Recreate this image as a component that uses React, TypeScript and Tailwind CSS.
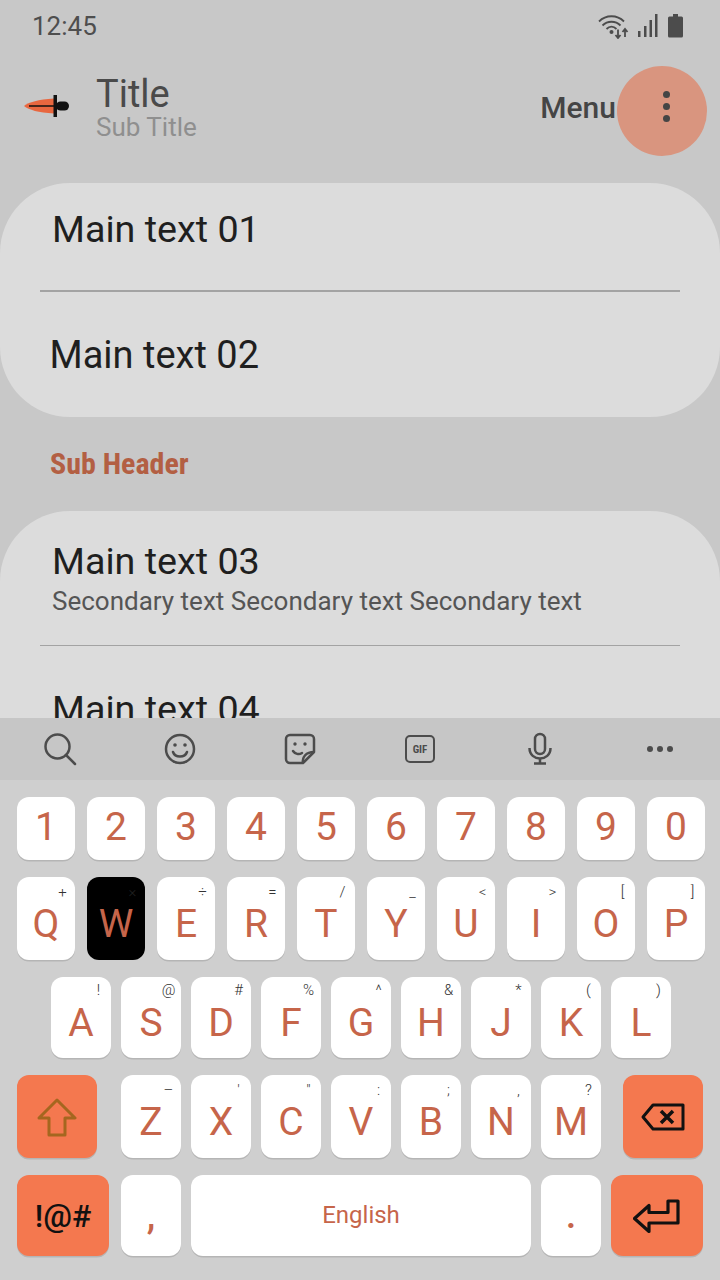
function Key({ label, sub, w = "w-[60px]", h, black, subTop = "top-[6px]" }: { label: string; sub?: string; w?: string; h: string; black?: boolean; subTop?: string }) {
  return (
    <div className={`relative ${w} ${h} shrink-0 rounded-[12px] flex items-center justify-center ${black ? "bg-black" : "bg-white shadow-[0_1.5px_0_#b5b5b5]"}`}>
      <span className="text-[39px] leading-none text-[#c6654a] mt-[12px]">{label}</span>
      {sub && <span className={`absolute ${subTop} right-0 w-[25px] text-center text-[15px] leading-[18px] font-light ${black ? "text-[#222]" : "text-[#333]"}`}>{sub}</span>}
    </div>
  );
}

function Num({ label }: { label: string }) {
  return (
    <div className="w-[58px] h-[63px] shrink-0 rounded-[12px] bg-white shadow-[0_1.5px_0_#b5b5b5] flex items-center justify-center">
      <span className="text-[39px] leading-none text-[#c6654a] mb-[2px]">{label}</span>
    </div>
  );
}

const row2: [string, string][] = [["Q", "+"], ["W", "×"], ["E", "÷"], ["R", "="], ["T", "/"], ["Y", "_"], ["U", "<"], ["I", ">"], ["O", "["], ["P", "]"]];
const row3: [string, string][] = [["A", "!"], ["S", "@"], ["D", "#"], ["F", "%"], ["G", "^"], ["H", "&"], ["J", "*"], ["K", "("], ["L", ")"]];
const row4: [string, string][] = [["Z", "–"], ["X", "'"], ["C", '"'], ["V", ":"], ["B", ";"], ["N", ","], ["M", "?"]];

export default function App() {
  return (
    <div className="w-[720px] h-[1280px] overflow-hidden flex flex-col bg-[#c8c8c8] font-['Roboto',sans-serif]">
      <div className="h-[718px] shrink-0 overflow-hidden">
        {/* status bar */}
        <div className="h-[52px] pl-[32px] pr-[36px] flex items-center justify-between">
          <span className="text-[26px] leading-none text-[#4e4e4e]">12:45</span>
          <div className="flex items-center gap-[8px]">
            <svg width="32" height="26" viewBox="0 0 32 26" fill="none" stroke="#4c4c4c" strokeWidth="1.800">
              <path d="M1 8.500C8 1.500 19 1.500 26 8.500" />
              <path d="M4.500 12.500C9.500 7.500 17.500 7.500 22.500 12.500" />
              <path d="M8.500 16C11.500 13 15.500 13 18.500 16" />
              <circle cx="13.500" cy="19" r="2" fill="#4c4c4c" stroke="none" />
              <path d="M20 16.500V25M17.500 22l2.500 3 2.500-3" strokeWidth="1.800" />
              <path d="M27 24V16M24.500 19l2.500-3 2.500 3" strokeWidth="1.800" />
            </svg>
            <svg width="20" height="24" viewBox="0 0 20 24" fill="#4c4c4c">
              <rect x="0" y="17" width="2.500" height="6" />
              <rect x="6" y="12" width="2.500" height="11" />
              <rect x="11.500" y="6" width="2.500" height="17" />
              <rect x="17" y="0" width="2.500" height="23" />
            </svg>
            <svg width="16" height="24" viewBox="0 0 16 24" fill="#4c4c4c" className="ml-[2px]">
              <path d="M5 0h5v2.500h3.500a1.500 1.500 0 0 1 1.500 1.500v18a1.500 1.500 0 0 1-1.500 1.500h-12a1.500 1.500 0 0 1-1.500-1.500V4a1.500 1.500 0 0 1 1.500-1.500H5z" />
            </svg>
          </div>
        </div>

        {/* app bar */}
        <div className="h-[131px] pl-[24px] pr-[13px] flex items-center pb-[24px]">
          <svg width="46" height="24" viewBox="0 0 46 24" className="shrink-0">
            <path d="M0 12C5 8 14 5.500 30 4.500V19.500C14 18.500 5 16 0 12Z" fill="#e8673f" />
            <path d="M5 12H38" stroke="#111" strokeWidth="1.600" />
            <path d="M29.500 1h3.500v22h-3.500z" fill="#111" />
            <rect x="32" y="7.500" width="13" height="9" rx="4.500" fill="#111" />
          </svg>
          <div className="ml-[26px] mt-[2px] flex flex-col">
            <span className="text-[38px] leading-[40px] text-[#4a4a4a]">Title</span>
            <span className="text-[26px] leading-[26px] text-[#8f8f8f]">Sub Title</span>
          </div>
          <span className="ml-auto mt-[4px] text-[30px] font-medium text-[#454545] mr-[1px]">Menu</span>
          <div className="w-[90px] h-[90px] mt-[10px] rounded-full bg-[#d9957f] flex flex-col items-center justify-center gap-[5px] pl-[8px] pb-[8px] shrink-0">
            <span className="w-[7px] h-[7px] rounded-full bg-[#454545]" />
            <span className="w-[7px] h-[7px] rounded-full bg-[#454545]" />
            <span className="w-[7px] h-[7px] rounded-full bg-[#454545]" />
          </div>
        </div>

        {/* first card */}
        <div className="h-[234px] rounded-[70px] bg-[#dcdcdc] flex flex-col">
          <div className="h-[107px] pl-[52px] pt-[24px] text-[37.700px] leading-[44px] text-[#1f1f1f]">Main text 01</div>
          <div className="mx-[40px] h-[1.500px] bg-[#a3a3a3]" />
          <div className="pl-[49.500px] pt-[41px] text-[38px] leading-[44px] text-[#1f1f1f]">Main text 02</div>
        </div>

        <div className="h-[94px] pl-[50px] pt-[30px] text-[#b35f43] text-[30px] leading-[34px] font-bold [font-stretch:75%] whitespace-nowrap">
          Sub Header
        </div>

        {/* second card */}
        <div className="h-[300px] rounded-[70px] bg-[#dcdcdc] flex flex-col">
          <div className="h-[133.500px] pl-[52px] pt-[29px]">
            <div className="text-[37.700px] leading-[43px] text-[#1f1f1f]">Main text 03</div>
            <div className="text-[26px] leading-[36px] text-[#555]">Secondary text Secondary text Secondary text</div>
          </div>
          <div className="mx-[40px] h-[1.500px] bg-[#a3a3a3]" />
          <div className="pl-[52px] pt-[41px] text-[37.700px] leading-[44px] text-[#1f1f1f]">Main text 04</div>
        </div>
      </div>

      {/* keyboard toolbar */}
      <div className="h-[62px] shrink-0 bg-[#c6c6c6] flex items-center pl-[40px] pr-[40px] justify-between">
        <svg width="40" height="40" viewBox="0 0 40 40" fill="none" stroke="#4c4c4c" strokeWidth="2.500">
          <circle cx="17.500" cy="17.500" r="12" />
          <path d="M26 26L35 35" strokeLinecap="round" />
        </svg>
        <svg width="40" height="40" viewBox="0 0 40 40" fill="none" stroke="#4c4c4c" strokeWidth="2.500">
          <circle cx="20" cy="20" r="14" />
          <circle cx="15" cy="16" r="1.800" fill="#4c4c4c" stroke="none" />
          <circle cx="25" cy="16" r="1.800" fill="#4c4c4c" stroke="none" />
          <path d="M13 23C15 29 25 29 27 23" strokeLinecap="round" />
        </svg>
        <svg width="40" height="40" viewBox="0 0 40 40" fill="none" stroke="#4c4c4c" strokeWidth="2.500">
          <path d="M23 34H10a4 4 0 0 1-4-4V10a4 4 0 0 1 4-4h20a4 4 0 0 1 4 4v13L23 34Z" strokeLinejoin="round" />
          <path d="M23 34c-1-6 3-11 11-11" />
          <circle cx="15" cy="15" r="1.700" fill="#4c4c4c" stroke="none" />
          <circle cx="25" cy="15" r="1.700" fill="#4c4c4c" stroke="none" />
          <path d="M13 22c2 3 6 4 9 2" strokeLinecap="round" />
        </svg>
        <div className="w-[40px] h-[40px] flex items-center justify-center">
          <div className="w-[30px] h-[28px] rounded-[5px] border-[2.500px] border-[#4c4c4c] flex items-center justify-center text-[11px] font-bold leading-none text-[#4c4c4c] [font-stretch:75%]">GIF</div>
        </div>
        <svg width="40" height="40" viewBox="0 0 40 40" fill="none" stroke="#4c4c4c" strokeWidth="2.500">
          <rect x="15" y="5" width="10" height="20" rx="5" />
          <path d="M9.500 19c0 14 21 14 21 0" />
          <path d="M20 29v5M14 34.500h12" />
        </svg>
        <div className="w-[40px] flex justify-center gap-[4px]">
          <span className="w-[6px] h-[6px] rounded-full bg-[#4c4c4c]" />
          <span className="w-[6px] h-[6px] rounded-full bg-[#4c4c4c]" />
          <span className="w-[6px] h-[6px] rounded-full bg-[#4c4c4c]" />
        </div>
      </div>

      {/* keyboard */}
      <div className="flex-1 bg-[#cfcfcf] pt-[17px] flex flex-col gap-[17px]">
        <div className="flex gap-[12px] pl-[17px]">
          {["1", "2", "3", "4", "5", "6", "7", "8", "9", "0"].map((n) => <Num key={n} label={n} />)}
        </div>
        <div className="flex gap-[12px] pl-[17px]">
          {row2.map(([l, s]) => <Key key={l} label={l} sub={s} w="w-[58px]" h="h-[83px]" black={l === "W"} />)}
        </div>
        <div className="flex gap-[10px] pl-[51px]">
          {row3.map(([l, s]) => <Key key={l} label={l} sub={s} h="h-[81px]" subTop="top-[4px]" />)}
        </div>
        <div className="flex pl-[17px]">
          <div className="w-[80px] h-[83px] rounded-[12px] bg-[#f4784f] shadow-[0_1.5px_0_#b5b5b5] flex items-center justify-center shrink-0">
            <svg width="40" height="40" viewBox="0 0 40 40" fill="none" stroke="#a5661f" strokeWidth="3" strokeLinejoin="round">
              <path d="M20 3L38 21H28V38H12V21H2Z" />
            </svg>
          </div>
          <div className="flex gap-[10px] ml-[24px]">
            {row4.map(([l, s]) => <Key key={l} label={l} sub={s} h="h-[83px]" />)}
          </div>
          <div className="w-[80px] h-[83px] ml-[22px] rounded-[12px] bg-[#f4784f] shadow-[0_1.5px_0_#b5b5b5] flex items-center justify-center shrink-0">
            <svg width="44" height="30" viewBox="0 0 44 30" fill="none" stroke="#111" strokeWidth="3">
              <path d="M12 3H42V27H12L2 15Z" strokeLinejoin="round" />
              <path d="M20 9L32 21M32 9L20 21" strokeWidth="3.500" />
            </svg>
          </div>
        </div>
        <div className="flex gap-[10px] pl-[17px]">
          <div className="w-[92px] mr-[2px] h-[81px] rounded-[12px] bg-[#f4784f] shadow-[0_1.5px_0_#b5b5b5] flex items-center justify-center shrink-0 text-[32px] font-medium text-[#111]">!@#</div>
          <div className="w-[60px] h-[81px] rounded-[12px] bg-white shadow-[0_1.5px_0_#b5b5b5] flex items-center justify-center shrink-0 text-[38px] font-medium text-[#c6654a]">,</div>
          <div className="w-[340px] h-[81px] pb-[2px] rounded-[12px] bg-white shadow-[0_1.5px_0_#b5b5b5] flex items-center justify-center shrink-0 text-[24px] text-[#c6654a]">English</div>
          <div className="w-[60px] h-[81px] rounded-[12px] bg-white shadow-[0_1.5px_0_#b5b5b5] flex items-center justify-center shrink-0 text-[38px] font-medium text-[#c6654a]">.</div>
          <div className="w-[92px] h-[81px] rounded-[12px] bg-[#f4784f] shadow-[0_1.5px_0_#b5b5b5] flex items-center justify-center shrink-0">
            <svg width="48" height="36" viewBox="0 0 48 36" fill="none" stroke="#111" strokeWidth="3.200" strokeLinejoin="round">
              <path d="M1.500 20.500L16 7.500V14.500H35V3H45V25H16V33.500Z" />
            </svg>
          </div>
        </div>
      </div>
    </div>
  );
}
